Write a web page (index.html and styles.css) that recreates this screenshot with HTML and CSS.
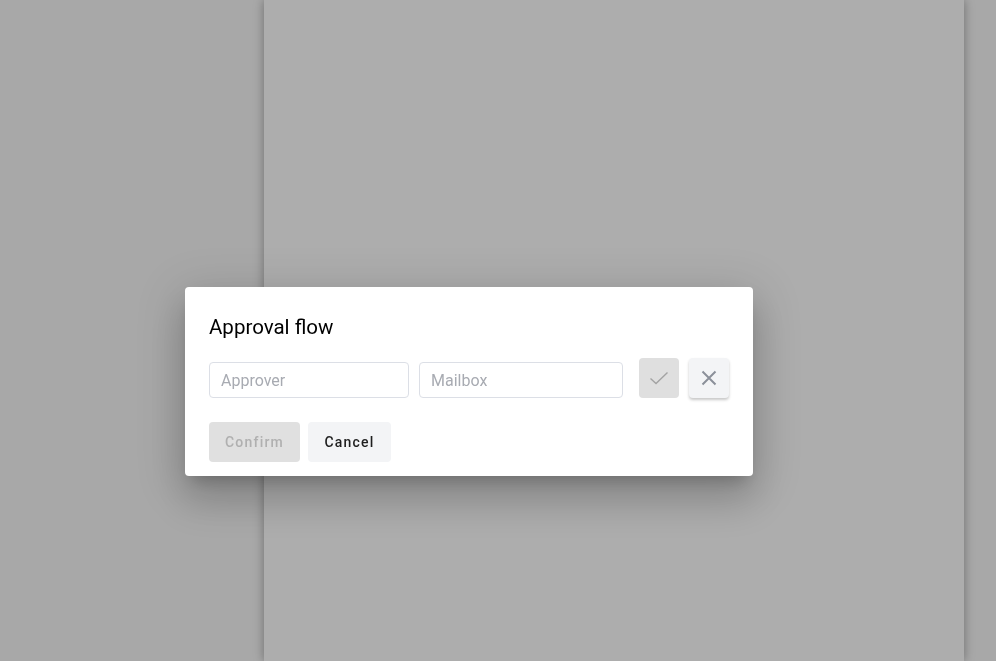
FILE: index.html
```html
<!DOCTYPE html>
<html>
<head>
<meta charset="utf-8">
<link rel="stylesheet" href="styles.css">
</head>
<body>
<div class="page">
  <div class="sheet"></div>
</div>
<div class="overlay"></div>
<div class="dialog">
  <h2 class="title">Approval flow</h2>
  <div class="row">
    <input class="field approver" type="text" placeholder="Approver">
    <input class="field mailbox" type="text" placeholder="Mailbox">
    <button class="icon-btn ok" disabled>
      <svg width="20" height="20" viewBox="0 0 20 20"><path d="M1.5 10.5 L7 15.5 L18.5 4.5" fill="none" stroke="currentColor" stroke-width="1.4"/></svg>
    </button>
    <button class="icon-btn close">
      <svg width="16" height="16" viewBox="0 0 16 16"><path d="M1.5 1.5 L14.5 14.5 M14.5 1.5 L1.5 14.5" fill="none" stroke="currentColor" stroke-width="2"/></svg>
    </button>
  </div>
  <div class="actions">
    <button class="btn confirm" disabled>Confirm</button>
    <button class="btn cancel">Cancel</button>
  </div>
</div>
</body>
</html>
```
FILE: styles.css
```css
html, body {
  margin: 0;
  padding: 0;
  height: 100%;
}
body {
  background: #f8f8f8;
  font-family: Roboto, "Liberation Sans", sans-serif;
  overflow: hidden;
}
.page {
  display: flex;
  height: 100%;
  padding-left: 264px;
}
.sheet {
  width: 700px;
  height: 100%;
  background: #ffffff;
  box-shadow: 0 0 10px rgba(0, 0, 0, 0.35);
}
.overlay {
  position: fixed;
  inset: 0;
  background: rgba(0, 0, 0, 0.32);
}
.dialog {
  position: absolute;
  left: 185px;
  top: 287px;
  width: 568px;
  box-sizing: border-box;
  padding: 28px 24px 14px;
  background: #fff;
  border-radius: 4px;
  box-shadow: 0 11px 15px -7px rgba(0,0,0,0.2), 0 24px 38px 3px rgba(0,0,0,0.14), 0 9px 46px 8px rgba(0,0,0,0.12);
}
.title {
  margin: 0;
  font-size: 20.5px;
  line-height: 24px;
  font-weight: 400;
  color: #000;
}
.row {
  display: flex;
  align-items: flex-end;
  margin-top: 19px;
}
.field {
  box-sizing: border-box;
  height: 36px;
  border: 1px solid #dcdfe6;
  border-radius: 4px;
  padding: 0 11px;
  font-family: Roboto, "Liberation Sans", sans-serif;
  font-size: 16px;
  color: #333;
  outline: none;
}
.field::placeholder {
  color: #a8abb2;
}
.approver { width: 200px; }
.mailbox { width: 204px; margin-left: 10px; }
.icon-btn {
  width: 40px;
  height: 40px;
  border: none;
  border-radius: 4px;
  padding: 0;
  display: flex;
  align-items: center;
  justify-content: center;
}
.ok {
  margin-left: 16px;
  background: #dfdfdf;
  color: #a3a3a3;
}
.close {
  margin-left: 10px;
  background: #f3f4f6;
  color: #8b909a;
  box-shadow: 0 2px 3px rgba(0,0,0,0.22);
}
.actions {
  display: flex;
  gap: 8px;
  margin-top: 24px;
}
.btn {
  height: 40px;
  border: none;
  border-radius: 4px;
  font-family: Roboto, "Liberation Sans", sans-serif;
  font-size: 14px;
  font-weight: 500;
  letter-spacing: 1.2px;
  padding: 0 16px;
}
.confirm {
  width: 91px;
  background: #e0e0e0;
  color: #b0b0b0;
}
.cancel {
  width: 83px;
  background: #f3f4f6;
  color: #1f1f1f;
}
```
